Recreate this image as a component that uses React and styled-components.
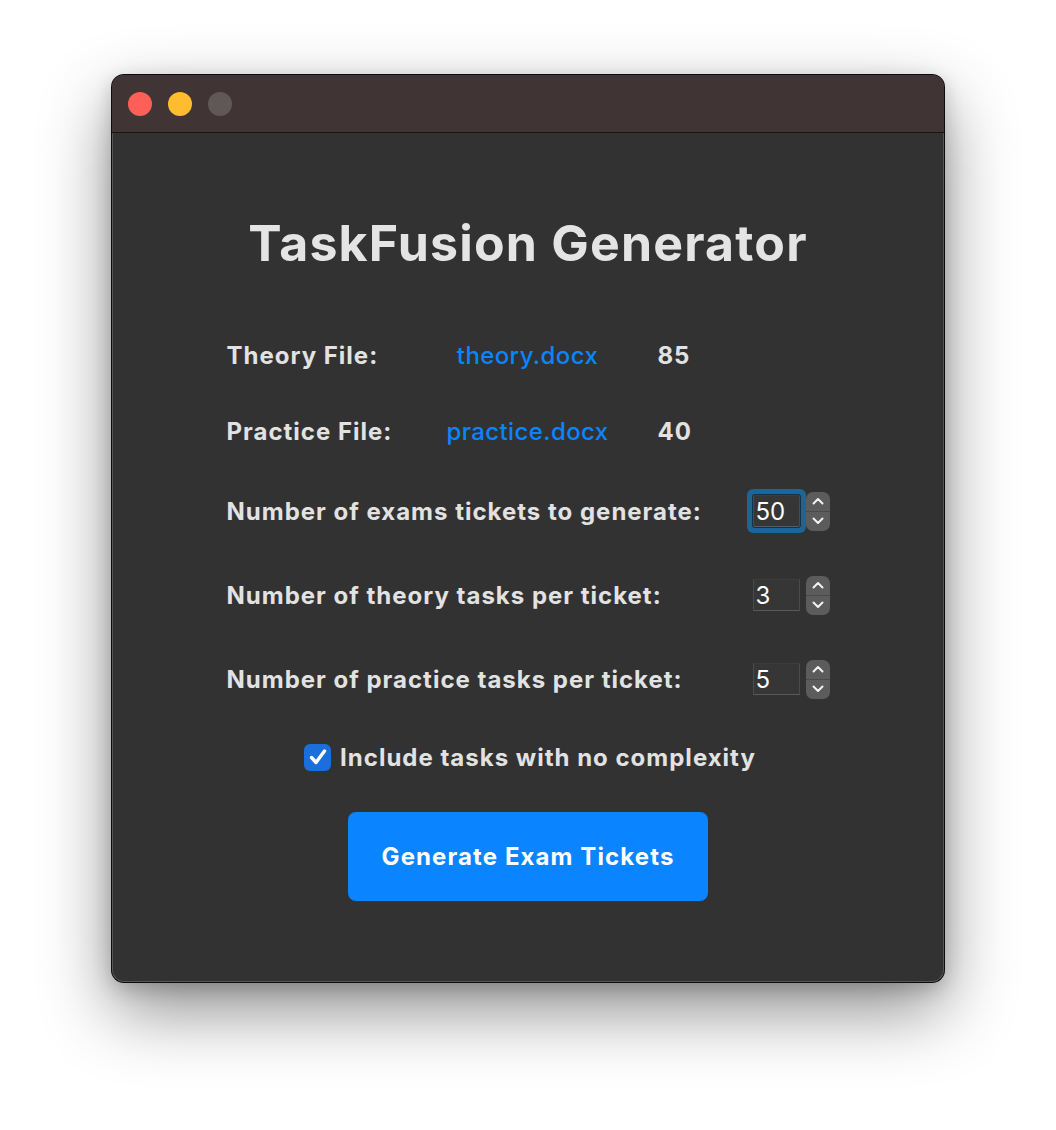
import React from "react";
import styled, { createGlobalStyle } from "styled-components";

const GlobalStyle = createGlobalStyle`
  html, body {
    margin: 0;
    padding: 0;
    background: #ffffff;
  }
  body {
    font-family: Inter, "Noto Sans", "Liberation Sans", sans-serif;
  }
`;

const files = [
  { label: "Theory File:", name: "theory.docx", count: 85 },
  { label: "Practice File:", name: "practice.docx", count: 40 },
];

const numbers = [
  { label: "Number of exams tickets to generate:", value: 50, focused: true },
  { label: "Number of theory tasks per ticket:", value: 3 },
  { label: "Number of practice tasks per ticket:", value: 5 },
];

export default function App() {
  return (
    <>
      <GlobalStyle />
      <Page>
        <Window>
          <TitleBar>
            <Light color="#fe5f57" />
            <Light color="#febc2e" />
            <Light color="#605856" />
          </TitleBar>
          <Body>
            <Title>TaskFusion Generator</Title>
            <Form>
              {files.map((f, i) => (
                <FileRow key={i} first={i === 0}>
                  <Label>{f.label}</Label>
                  <FileName>{f.name}</FileName>
                  <Count>{f.count}</Count>
                </FileRow>
              ))}
              {numbers.map((n, i) => (
                <NumberRow key={i} first={i === 0}>
                  <Label>{n.label}</Label>
                  <Spin>
                    <Field focused={n.focused}>
                      <input type="text" defaultValue={n.value} />
                    </Field>
                    <Stepper>
                      <StepHalf>
                        <svg width="12" height="8" viewBox="0 0 12 8">
                          <path d="M1.5 6.5 L6 2 L10.5 6.5" fill="none" stroke="#f2f2f2" strokeWidth="2" strokeLinecap="round" strokeLinejoin="round" />
                        </svg>
                      </StepHalf>
                      <StepHalf bottom>
                        <svg width="12" height="8" viewBox="0 0 12 8">
                          <path d="M1.5 1.5 L6 6 L10.5 1.5" fill="none" stroke="#f2f2f2" strokeWidth="2" strokeLinecap="round" strokeLinejoin="round" />
                        </svg>
                      </StepHalf>
                    </Stepper>
                  </Spin>
                </NumberRow>
              ))}
            </Form>
            <CheckRow>
              <CheckBox>
                <svg width="20" height="18" viewBox="0 0 20 18">
                  <path d="M3.5 9.5 L8 14.5 L16.5 3" fill="none" stroke="#ffffff" strokeWidth="3.4" strokeLinecap="round" strokeLinejoin="round" />
                </svg>
              </CheckBox>
              <CheckLabel>Include tasks with no complexity</CheckLabel>
            </CheckRow>
            <GenerateButton>Generate Exam Tickets</GenerateButton>
          </Body>
        </Window>
      </Page>
    </>
  );
}

const Page = styled.div`
  width: 1056px;
  height: 1130px;
  padding: 75px 0 0 112px;
  box-sizing: border-box;
`;

const Window = styled.div`
  width: 832px;
  height: 907px;
  border-radius: 12px;
  overflow: hidden;
  background: #323232;
  box-shadow: 0 0 0 1px #0c0c0c, inset 0 0 0 1px rgba(255, 255, 255, 0.18),
    0 28px 70px rgba(0, 0, 0, 0.45), 0 6px 20px rgba(0, 0, 0, 0.2);
  display: flex;
  flex-direction: column;
`;

const TitleBar = styled.div`
  height: 57px;
  background: #403534;
  border-bottom: 1px solid #151515;
  display: flex;
  align-items: center;
  gap: 16px;
  padding-left: 16px;
  flex-shrink: 0;
`;

const Light = styled.span`
  width: 24px;
  height: 24px;
  border-radius: 50%;
  background: ${(p) => p.color};
`;

const Body = styled.div`
  flex: 1;
  display: flex;
  flex-direction: column;
  align-items: center;
  color: #e2e2e2;
`;

const Title = styled.h1`
  margin: 82px 0 0;
  font-size: 50px;
  line-height: 56px;
  font-weight: 700;
  color: #e4e4e4;
  letter-spacing: 1.2px;
`;

const Form = styled.div`
  width: 603px;
  margin-top: 64px;
  display: flex;
  flex-direction: column;
`;

const FileRow = styled.div`
  display: grid;
  grid-template-columns: 210px 182px auto;
  align-items: center;
  height: 40px;
  margin-top: ${(p) => (p.first ? 0 : 36)}px;
`;

const NumberRow = styled.div`
  display: flex;
  align-items: center;
  justify-content: space-between;
  height: 40px;
  margin-top: ${(p) => (p.first ? 40 : 44)}px;
`;

const Label = styled.span`
  font-size: 24px;
  font-weight: 700;
  letter-spacing: 1px;
  color: #e2e2e2;
  white-space: nowrap;
`;

const FileName = styled.span`
  font-size: 24px;
  font-weight: 500;
  letter-spacing: 0.4px;
  color: #0a84ff;
  text-align: center;
  white-space: nowrap;
`;

const Count = styled.span`
  padding-left: 39px;
  font-size: 24px;
  font-weight: 700;
  letter-spacing: 1px;
  color: #e2e2e2;
`;

const Spin = styled.div`
  display: flex;
  align-items: center;
  gap: 6px;
`;

const Field = styled.div`
  width: 47px;
  height: 32px;
  box-sizing: border-box;
  background: #363636;
  border: 1px solid #4a4a4a;
  border-top-color: #3d3d3d;
  border-bottom-color: #5a5a5a;
  box-shadow: ${(p) => (p.focused ? "0 0 0 1px #10344f, 0 0 0 6px #1d6597" : "none")};
  border-radius: ${(p) => (p.focused ? "2px" : "0")};
  display: flex;
  align-items: center;

  input {
    width: 100%;
    background: transparent;
    border: none;
    outline: none;
    color: #ffffff;
    font-family: Inter, "Liberation Sans", sans-serif;
    font-size: 24px;
    padding: 0 0 0 2px;
  }
`;

const Stepper = styled.div`
  width: 24px;
  height: 39px;
  border-radius: 7px;
  background: #5c5c5c;
  display: flex;
  flex-direction: column;
  overflow: hidden;
`;

const StepHalf = styled.div`
  flex: 1;
  display: flex;
  align-items: center;
  justify-content: center;
  border-top: ${(p) => (p.bottom ? "1px solid #4a4a4a" : "none")};
`;

const CheckRow = styled.div`
  display: flex;
  align-items: center;
  gap: 9px;
  height: 40px;
  margin-top: 38px;
  margin-left: 4px;
`;

const CheckBox = styled.span`
  width: 27px;
  height: 27px;
  border-radius: 6px;
  background: #1a6fdc;
  display: flex;
  align-items: center;
  justify-content: center;
`;

const CheckLabel = styled.span`
  font-size: 24px;
  font-weight: 700;
  letter-spacing: 1px;
  color: #e2e2e2;
`;

const GenerateButton = styled.button`
  margin-top: 35px;
  width: 360px;
  height: 89px;
  border: none;
  border-radius: 8px;
  background: #0a84ff;
  color: #ffffff;
  font-family: Inter, "Liberation Sans", sans-serif;
  font-size: 24px;
  font-weight: 700;
  letter-spacing: 1.1px;
  cursor: pointer;
`;
